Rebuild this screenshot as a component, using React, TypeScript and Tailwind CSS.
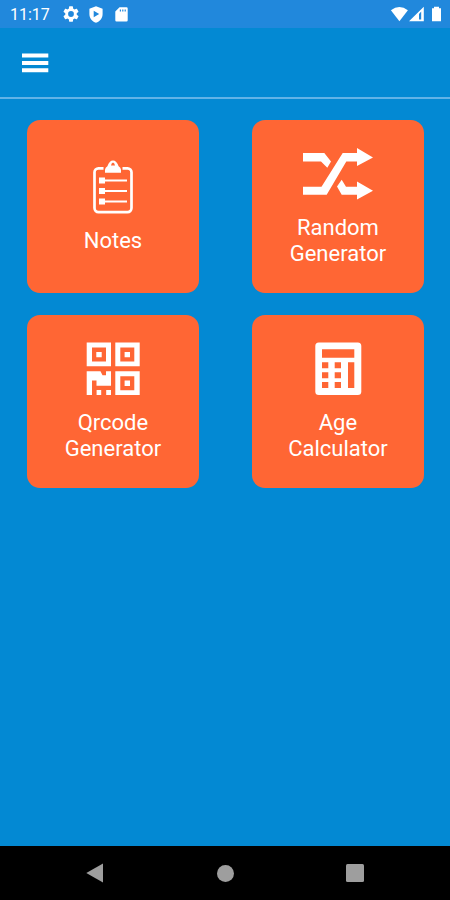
import React from "react";

function NotesIcon() {
  return (
    <svg width="80" height="68" viewBox="0 0 80 68" fill="none" stroke="white">
      <rect x="21.5" y="8.3" width="37" height="43.8" rx="4" strokeWidth="2.7" />
      <path d="M30.5 8.3h19" stroke="#ff6634" strokeWidth="4" />
      <path fill="white" stroke="none" fillRule="evenodd" d="M32 12.8V9.8Q32.2 7.6 34.4 6.2Q36.4 .4 40 .4T45.6 6.2Q47.8 7.6 48 9.8V12.8ZM40 2.6Q38.4 3.2 38 5.6H42Q41.6 3.2 40 2.6Z" />
      <path fill="white" stroke="none" d="M26 17.4h6v6h-6zM26 28h6v6h-6zM26 38.4h6v6h-6z" />
      <path strokeWidth="2" d="M32 20.4h22M32 31h22M32 41.4h22" />
    </svg>
  );
}

function RandomIcon() {
  return (
    <svg width="80" height="68" viewBox="0 0 80 68" fill="white">
      <path d="M5 6H26.3L33 14.4 29.3 20.7 23 14.4H5Z" />
      <path d="M5 39.7H23.5L44.7 6H59V1L75 10.4 59 19V14.4H48.3L28.7 47.7H5Z" />
      <path d="M43.7 32.7 48 39.7H59V34.4L75 43.7 59 52.4V47.7H43.7L39 39.4Z" />
    </svg>
  );
}

function QrIcon() {
  return (
    <svg width="80" height="68" viewBox="0 0 80 68" fill="white" fillRule="evenodd">
      <path d="M13.7.6H38V24.3H13.7ZM19 5.6V19.6H33V5.6ZM23.3 10h5.4v5.3h-5.4Z" />
      <path d="M42.3.6H66.7V24.3H42.3ZM47.3 5.6V19.6H61.3V5.6ZM51.6 10h5.4v5.3h-5.4Z" />
      <path d="M42.3 29.3H66.7V53H42.3ZM47.3 34.3V48.3H61.3V34.3ZM51.6 38.6h5.4v5.3h-5.4Z" />
      <path d="M13.7 29.3H27.5L29.5 33.3H33V29.3H38V43.7H23.5V38.6H19V53H13.7ZM23.6 48h4.6v5h-4.6ZM33.2 48h4.8v5h-4.8Z" />
    </svg>
  );
}

function CalculatorIcon() {
  return (
    <svg width="80" height="68" viewBox="0 0 80 68">
      <rect x="17.3" y=".6" width="46" height="52.3" rx="3.5" fill="white" />
      <path fill="#ff6634" d="M24 7.3h32.3v8.4H24zM24 20.3h6.3v6H24zM36.7 20.3H43v6h-6.3zM24 30.3h6.3v6H24zM36.7 30.3H43v6h-6.3zM24 40h6.3v6H24zM36.7 40H43v6h-6.3zM50 20.3h6.3V46H50z" />
    </svg>
  );
}

function Card({ icon, lines }: { icon: React.ReactNode; lines: string[] }) {
  return (
    <button className="flex h-[172.3px] w-[172.3px] flex-col items-center justify-center rounded-[13px] bg-[#ff6634] text-[22px] leading-[26px] text-white">
      {icon}
      {lines.map((line) => (
        <span key={line}>{line}</span>
      ))}
    </button>
  );
}

function StatusBar() {
  return (
    <div className="flex h-7 items-center bg-[#2188dc] pl-[10px] pr-[8px] text-white">
      <span className="w-[53px] pt-[2px] text-[16px] leading-5">11:17</span>
      <svg width="16" height="16" viewBox="2 2 20 20" fill="white">
        <path d="M19.14 12.94c.04-.3.06-.61.06-.94s-.02-.64-.07-.94l2.03-1.58a.5.5 0 0 0 .12-.61l-1.92-3.32a.49.49 0 0 0-.59-.22l-2.39.96a7 7 0 0 0-1.62-.94l-.36-2.54A.48.48 0 0 0 13.92 2.4h-3.84a.47.47 0 0 0-.47.41l-.36 2.54c-.59.24-1.13.57-1.62.94l-2.39-.96a.48.48 0 0 0-.59.22L2.74 8.87a.48.48 0 0 0 .12.61l2.03 1.58a7 7 0 0 0 0 1.88l-2.03 1.58a.5.5 0 0 0-.12.61l1.92 3.32c.12.22.37.29.59.22l2.39-.96c.5.38 1.03.7 1.62.94l.36 2.54c.05.24.24.41.48.41h3.84c.24 0 .44-.17.47-.41l.36-2.54a7 7 0 0 0 1.62-.94l2.39.96c.22.08.47 0 .59-.22l1.92-3.32a.5.5 0 0 0-.12-.61zM12 15.6a3.6 3.6 0 1 1 0-7.2 3.6 3.6 0 0 1 0 7.2z" />
      </svg>
      <svg width="14" height="17" viewBox="0 0 14 17" fill="white" fillRule="evenodd" className="ml-[10px] mt-px">
        <path d="M7 .3 13.6 2.8V8C13.6 12 11 15.5 7 16.7 3 15.5.4 12 .4 8V2.8ZM4.7 4.7V11.3L10.2 8Z" />
      </svg>
      <svg width="13" height="15" viewBox="0 0 13 15" fill="white" fillRule="evenodd" className="ml-[12px] mt-px">
        <path d="M4.5.3H11.5Q12.7.3 12.7 1.5V13.3Q12.7 14.5 11.5 14.5H1.5Q.3 14.5.3 13.3V4.5ZM4.8 2.5V4.6H6V2.5ZM7.2 2.5V4.6H8.4V2.5ZM9.6 2.5V4.6H10.8V2.5Z" />
      </svg>
      <svg width="52" height="18" viewBox="0 0 52 18" fill="white" className="ml-auto">
        <path d="M.9 5.3Q9.4 -1.5 17.9 5.3L9.4 16.2Z" />
        <path fillRule="evenodd" d="M19 16.2 33.8 1.8V16.2ZM31.2 6.5 29 9V14.5H31.2Z" />
        <path d="M42 3.3H44V1.7H49V3.3H51V16.2H42Z" />
      </svg>
    </div>
  );
}

export default function App() {
  return (
    <div className="flex h-[900px] w-[450px] flex-col overflow-hidden bg-[#0389d3] font-['Roboto',sans-serif]">
      <StatusBar />
      <header className="flex h-[71px] items-center border-b-2 border-[#62b3e7] pl-[22px]">
        <svg width="27" height="20" viewBox="0 0 27 20" fill="white" role="img" aria-label="Menu">
          <path d="M0 .6H26.3V4.6H0ZM0 8H26.3V12H0ZM0 15.3H26.3V19.3H0Z" />
        </svg>
      </header>
      <main className="grid flex-1 grid-cols-[172.3px_172.3px] content-start gap-x-[52.7px] gap-y-[22.7px] pl-[26.8px] pt-[21.4px]">
        <Card icon={<NotesIcon />} lines={["Notes"]} />
        <Card icon={<RandomIcon />} lines={["Random", "Generator"]} />
        <Card icon={<QrIcon />} lines={["Qrcode", "Generator"]} />
        <Card icon={<CalculatorIcon />} lines={["Age", "Calculator"]} />
      </main>
      <nav className="flex h-[54px] items-center bg-black pl-[86px]">
        <svg width="18" height="20" viewBox="0 0 18 20" fill="#9e9e9e">
          <path d="M.3 10 17 .5V19.5Z" />
        </svg>
        <span className="ml-[113px] size-[17px] rounded-full bg-[#9e9e9e]" />
        <span className="ml-[112px] size-[18px] rounded-[1.5px] bg-[#9e9e9e]" />
      </nav>
    </div>
  );
}
